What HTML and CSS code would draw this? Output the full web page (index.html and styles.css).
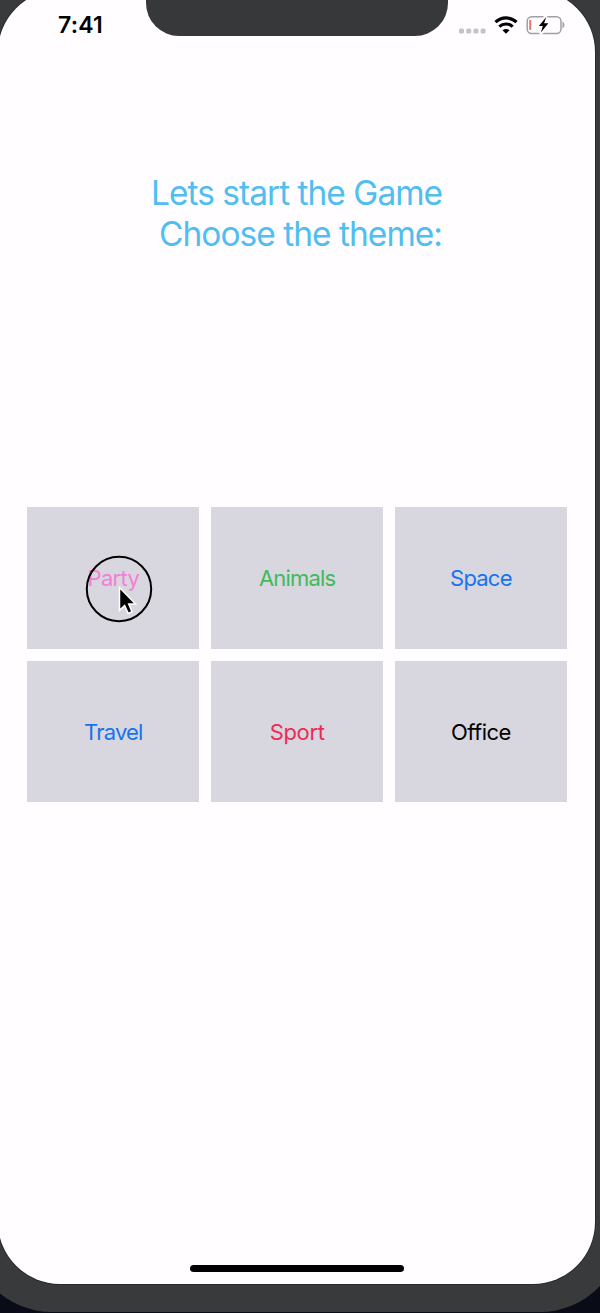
FILE: index.html
```html
<!DOCTYPE html>
<html lang="en">
<head>
<meta charset="utf-8">
<title>Choose the theme</title>
<link rel="stylesheet" href="styles.css">
</head>
<body>
<div class="device">
  <main class="screen">
    <header class="status">
      <time class="clock">7:41</time>
      <div class="notch"></div>
      <div class="indicators">
        <svg class="signal" width="28" height="6" viewBox="0 0 28 6"><g fill="#c4c3c6"><rect x="0" y=".5" width="5" height="5" rx="1.5"/><rect x="7.2" y=".5" width="5" height="5" rx="1.5"/><rect x="14.4" y=".5" width="5" height="5" rx="1.5"/><rect x="21.6" y=".5" width="5" height="5" rx="1.5"/></g></svg>
        <svg class="wifi" width="24" height="18" viewBox="0 0 24 18"><g fill="none" stroke="#000" stroke-width="3.2"><path d="M1.5 6.2C7.4.5 16.6.5 22.5 6.2"/><path d="M5.3 10.6C9.2 7.1 14.8 7.1 18.7 10.6"/></g><path d="M8.5 14.3Q12 11.5 15.5 14.3L12 17.8Z"/></svg>
        <svg class="battery" width="40" height="20" viewBox="0 0 40 20"><rect x="1.2" y="1.7" width="33.8" height="16.8" rx="4.5" fill="none" stroke="#a09fa1" stroke-width="1.5"/><path d="M36.5 6.5Q38.5 7.5 38.5 10T36.5 13.5Z" fill="#a09fa1"/><path d="M4.2 5v10" stroke="#e5796a" stroke-width="2"/><path d="M20 1L12 11.8H16.5L14.5 19L23 8.3H18.2Z" stroke="#fffdff" stroke-width="3"/><path d="M20.3 2L12.8 11H16.8L14.9 17.5L22.4 8.3H18.1Z"/></svg>
      </div>
    </header>
    <h1 class="title"><span class="line first">Lets start the Game</span><span class="line second">Choose the theme:</span></h1>
    <div class="themes">
      <button class="card party"><span>Party</span></button>
      <button class="card animals"><span>Animals</span></button>
      <button class="card space"><span>Space</span></button>
      <button class="card travel"><span>Travel</span></button>
      <button class="card sport"><span>Sport</span></button>
      <button class="card office"><span>Office</span></button>
    </div>
    <div class="home"></div>
  </main>
</div>
<svg class="pointer" width="68" height="68" viewBox="0 0 68 68"><circle cx="34" cy="34" r="32.2" fill="none" stroke="#000" stroke-width="2"/><path d="M34.5 32.5V55.3L39.6 50.6L43.2 58.4L47 56.7L43.7 49H50.5Z" fill="#000" stroke="#fff" stroke-width="1.5"/></svg>
</body>
</html>
```

FILE: styles.css
```css
* { box-sizing: border-box; }
body {
  margin: 0;
  height: 1313px;
  overflow: hidden;
  background: #090b17;
  font-family: Inter, "Liberation Sans", sans-serif;
  position: relative;
}
.device {
  width: 652px;
  height: 1351.5px;
  margin: -40px 0 0 -30px;
  padding: 30px 26.5px 28px 28px;
  border-radius: 82px;
  background: #393a3c;
}
.screen {
  width: 597px;
  height: 1293.5px;
  border-radius: 62px;
  background: #fffdff;
  box-shadow: 0 0 0 1px #272a2b;
  display: flex;
  flex-direction: column;
}
.status {
  height: 46px;
  display: flex;
  align-items: flex-start;
}
.clock {
  width: 148px;
  padding: 21px 0 0 60px;
  font-size: 23px;
  line-height: 28px;
  font-weight: 600;
  letter-spacing: .2px;
}
.notch {
  width: 302px;
  height: 46px;
  border-radius: 0 0 33px 33px;
  background: #363839;
}
.indicators {
  display: flex;
  align-items: center;
  padding: 25px 0 0 11px;
}
.signal { margin-top: 11px; }
.wifi { margin-left: 7px; }
.battery { margin-left: 8px; }
.title {
  margin: 137px 0 0 2px;
  display: flex;
  flex-direction: column;
  font-size: 33.5px;
  font-weight: 400;
  line-height: 41px;
  color: #51bdf0;
  white-space: pre;
}
.first { padding-left: 151px; letter-spacing: -.98px; }
.second { padding-left: 159px; letter-spacing: -.98px; }
.themes {
  margin: 252px 0 0 29.3px;
  width: 540px;
  display: grid;
  grid-template-columns: repeat(3, 172px);
  grid-template-rows: 142px 141.5px;
  gap: 11.8px;
}
.card {
  border: 0;
  padding: 0;
  background: #d8d6df;
  font: 400 22px/28px Inter, sans-serif;
  letter-spacing: -.3px;
}
.party { color: #f280d3; letter-spacing: -.7px; }
.animals { color: #3fba5c; letter-spacing: -.85px; }
.space, .travel { color: #1674ef; letter-spacing: -.8px; }
.sport { color: #ec2c55; letter-spacing: -.35px; }
.office { color: #000; letter-spacing: -.5px; }
.home {
  width: 214px;
  height: 7px;
  margin: auto auto 11.5px;
  border-radius: 4px;
  background: #000;
}
.pointer { position: absolute; left: 84.5px; top: 555px; }
```
